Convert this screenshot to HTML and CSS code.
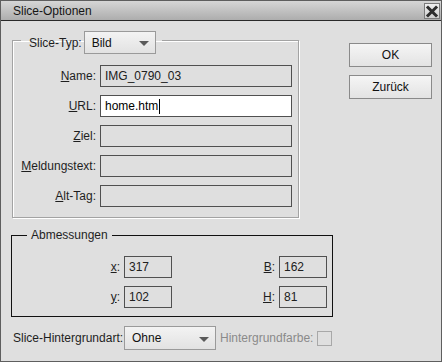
FILE: index.html
```html
<!DOCTYPE html>
<html>
<head>
  <title>Slice-Optionen</title>
  <meta name="viewport" content="width=device-width, initial-scale=1">
  <link rel="stylesheet" href="styles.css">
</head>
<body>
  <div class="window">
    <div class="titlebar">
      <span class="title">Slice-Optionen</span>
      <span class="close">
        <svg width="14" height="13" viewBox="0 0 14 13">
          <path d="M3 2.5 L11 10.5 M11 2.5 L3 10.5" stroke="#2e2e2e" stroke-width="3" stroke-linecap="square"/>
        </svg>
      </span>
    </div>

    <div class="content">
      <div class="main">
        <fieldset class="group typ">
          <legend class="typ-legend">
            <div class="legend-row">
              <span>Slice-Typ:</span>
              <span class="dropdown typ-select">Bild<i class="arrow"></i></span>
            </div>
          </legend>
          <div class="fields">
            <label><u>N</u>ame:</label>
            <div class="field">IMG_0790_03</div>
            <label><u>U</u>RL:</label>
            <div class="field active">home.htm<span class="caret"></span></div>
            <label><u>Z</u>iel:</label>
            <div class="field"></div>
            <label><u>M</u>eldungstext:</label>
            <div class="field"></div>
            <label><u>A</u>lt-Tag:</label>
            <div class="field"></div>
          </div>
        </fieldset>

        <fieldset class="group dims">
          <legend>Abmessungen</legend>
          <div class="dim-grid">
            <label><u>x</u>:</label>
            <div class="field small">317</div>
            <label><u>B</u>:</label>
            <div class="field small">162</div>
            <label><u>y</u>:</label>
            <div class="field small">102</div>
            <label><u>H</u>:</label>
            <div class="field small">81</div>
          </div>
        </fieldset>

        <div class="bg-row">
          <span class="bg-label">Slice-Hintergrundart:</span>
          <span class="dropdown bg-select">Ohne<i class="arrow"></i></span>
          <span class="disabled">Hintergrundfarbe:</span>
          <span class="swatch"></span>
        </div>
      </div>

      <div class="buttons">
        <button type="button">OK</button>
        <button type="button">Zurück</button>
      </div>
    </div>
  </div>
</body>
</html>
```

FILE: styles.css
```css
body {
  margin: 0;
  font-family: "Liberation Sans", Arial, sans-serif;
  font-size: 12px;
  color: #1e1e1e;
}

.window {
  box-sizing: border-box;
  width: 442px;
  height: 362px;
  border: 1px solid #5e5e5e;
  background-color: #dfdfdf;
}

.titlebar {
  height: 19px;
  border-bottom: 1px solid #2a2a2a;
  background: linear-gradient(#d6d6d6, #adadad);
  display: flex;
  align-items: center;
  justify-content: space-between;
  padding: 0 1px 0 12px;
}

.title {
  color: #151515;
}

.close {
  box-sizing: border-box;
  width: 16px;
  height: 16px;
  margin-top: 1px;
  border: 1px solid #7c7c7c;
  background: linear-gradient(#f0f0f0, #cfcfcf);
  display: flex;
  align-items: center;
  justify-content: center;
}

.content {
  display: flex;
  padding-left: 10px;
}

.main {
  width: 322px;
  flex-shrink: 0;
}

/* group boxes */
.group {
  margin: 0;
  min-width: 0;
  padding: 0;
}

.typ {
  margin: 10px 0 0 1px;
  width: 287px;
  box-sizing: border-box;
  border: 1px solid #a3a3a3;
  box-shadow: 1px 1px 0 #fff, inset 1px 1px 0 #fff;
  padding: 16px 6px 10px 0;
}

.typ-legend {
  margin-left: 8px;
  padding: 0 6px 0 8px;
  height: 18px;
}

.legend-row {
  display: flex;
  align-items: center;
  gap: 2px;
  height: 23px;
}

.fields {
  display: grid;
  grid-template-columns: 83px 192px;
  grid-auto-rows: 22px;
  column-gap: 4px;
  row-gap: 8px;
}

label {
  text-align: right;
  align-self: center;
  white-space: nowrap;
}

.field {
  box-sizing: border-box;
  height: 22px;
  border: 1px solid #505050;
  padding: 0 4px;
  display: flex;
  align-items: center;
  color: #202020;
}

.field.active {
  background-color: #fff;
  color: #000;
}

.caret {
  width: 1px;
  height: 15px;
  background-color: #000;
  margin-left: 1px;
}

.dims {
  margin-top: 10px;
  border: 1px solid #111;
  padding: 14px 8px 8px 0;
}

.dims legend {
  margin-left: 15px;
  padding: 0 4px;
  line-height: 14px;
}

.dim-grid {
  display: grid;
  grid-template-columns: 108px 48px 99px 48px;
  grid-auto-rows: 22px;
  column-gap: 4px;
  row-gap: 8px;
}

/* dropdowns */
.dropdown {
  box-sizing: border-box;
  height: 23px;
  border: 1px solid #9a9a9a;
  background: linear-gradient(#f3f3f3, #e2e2e2);
  display: flex;
  align-items: center;
  justify-content: space-between;
  padding: 0 6px 0 7px;
  color: #111;
  flex-shrink: 0;
}

.typ-select {
  width: 72px;
}

.arrow {
  width: 0;
  height: 0;
  border-left: 5px solid transparent;
  border-right: 5px solid transparent;
  border-top: 5px solid #5a5a5a;
  margin-top: 2px;
}

.bg-row {
  display: flex;
  align-items: center;
  margin-top: 9px;
  padding-left: 2px;
  white-space: nowrap;
}

.bg-label {
  width: 108px;
  flex-shrink: 0;
}

.bg-select {
  width: 92px;
  height: 24px;
  margin-left: 3px;
}

.disabled {
  color: #8a8a8a;
  margin-left: 4px;
  flex-shrink: 0;
}

.swatch {
  box-sizing: border-box;
  width: 15px;
  height: 15px;
  border: 1px solid #a8a8a8;
  margin-left: 4px;
  flex-shrink: 0;
}

/* buttons */
.buttons {
  display: flex;
  flex-direction: column;
  gap: 8px;
  padding-top: 22px;
  margin-left: 16px;
}

.buttons button {
  box-sizing: border-box;
  width: 83px;
  height: 24px;
  border: 1px solid #8a8a8a;
  background: linear-gradient(#f5f5f5, #e3e3e3);
  font-family: "Liberation Sans", Arial, sans-serif;
  font-size: 12px;
  color: #111;
  padding: 0;
}
```
